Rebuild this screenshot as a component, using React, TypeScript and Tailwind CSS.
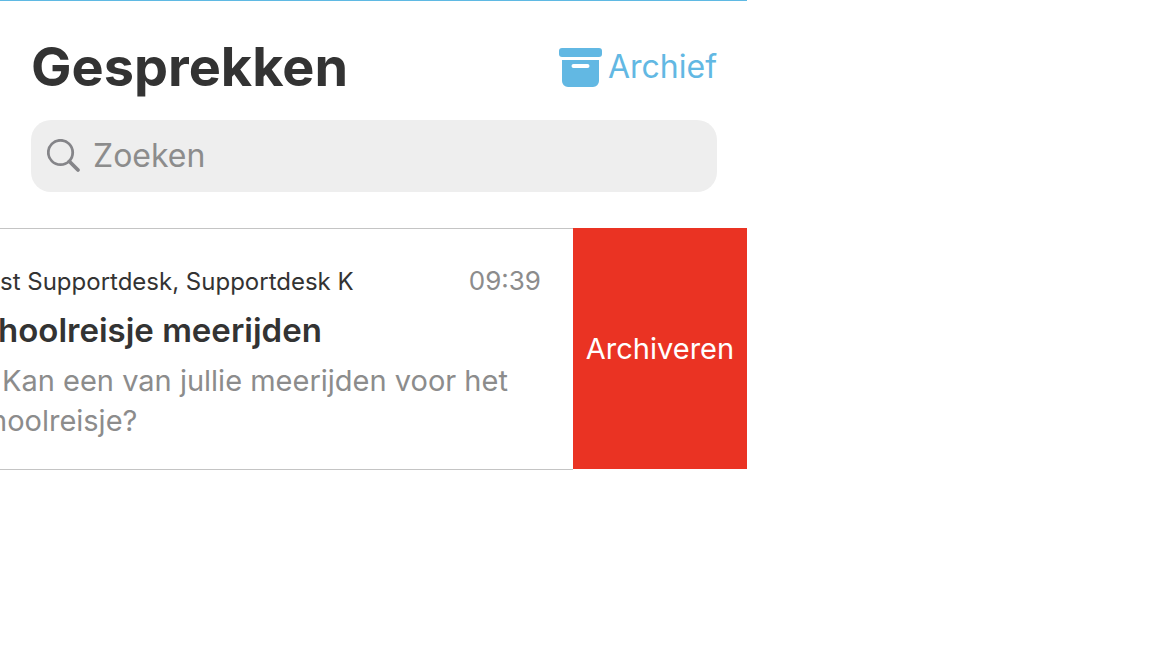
import { useState } from "react";

function ArchiveIcon() {
  return (
    <svg width="43" height="39" viewBox="0 0 43 39" fill="currentColor" aria-hidden="true">
      <rect x="0" y="0" width="43" height="9" rx="3" />
      <path
        fillRule="evenodd"
        d="M3 12h37v21a6 6 0 0 1-6 6H9a6 6 0 0 1-6-6V12Zm11.500 4a2 2 0 0 0 0 4h14a2 2 0 0 0 0-4h-14Z"
      />
    </svg>
  );
}

function SearchIcon() {
  return (
    <svg width="34" height="34" viewBox="0 0 34 34" fill="none" stroke="currentColor" aria-hidden="true">
      <circle cx="13.500" cy="13.500" r="12.200" strokeWidth="2.800" />
      <path d="M22.500 22.500l8.500 8.500" strokeWidth="3.800" strokeLinecap="round" />
    </svg>
  );
}

export default function App() {
  const [query, setQuery] = useState("");

  return (
    <div className="min-h-screen bg-white font-['Inter',sans-serif] text-[#333]">
      {/* Panel */}
      <main className="w-[65%] max-w-[747px] overflow-hidden border-t border-[#5fb9e3]">
        <header className="pt-8 pr-[30px] pl-[31px]">
          <div className="flex items-center justify-between">
            <h1 className="text-[54px] leading-[68px] font-bold">Gesprekken</h1>
            <a href="#archief" className="flex items-center gap-1.5 text-[32px] leading-10 text-[#62b8e3]">
              <ArchiveIcon />
              Archief
            </a>
          </div>
          <label className="mt-[19px] flex h-[72px] items-center gap-3 rounded-[20px] bg-[#eee] px-4 text-[#858589]">
            <SearchIcon />
            <input
              type="text"
              aria-label="Zoeken"
              placeholder="Zoeken"
              value={query}
              onChange={(e) => setQuery(e.target.value)}
              className="min-w-0 flex-1 bg-transparent text-[32px] leading-10 outline-none placeholder:text-[#8c8c8c]"
            />
          </label>
        </header>

        {/* Conversations */}
        <ul className="mt-9">
          <li className="flex">
            <article className="min-w-0 flex-1 border-y border-[#c4c4c4] pt-9 pr-8 pb-7">
              <div className="flex items-baseline justify-between whitespace-nowrap">
                <p className="text-2xl">st Supportdesk, Supportdesk K</p>
                <time className="text-[26px] leading-8 text-[#8c8c8c]">09:39</time>
              </div>
              <h2 className="mt-px -ml-0.5 text-[33px] leading-[62px] font-semibold whitespace-nowrap">
                hoolreisje meerijden
              </h2>
              {/* Row is swiped to the left, so the text runs off the edge */}
              <p className="-ml-2.5 indent-3 text-[29px] leading-10 whitespace-nowrap text-[#8c8c8c]">
                Kan een van jullie meerijden voor het
                <br />
                hoolreisje?
              </p>
            </article>
            <button type="button" className="mb-px w-[174px] bg-[#ea3323] text-[29px] text-white">
              Archiveren
            </button>
          </li>
        </ul>
      </main>
    </div>
  );
}
